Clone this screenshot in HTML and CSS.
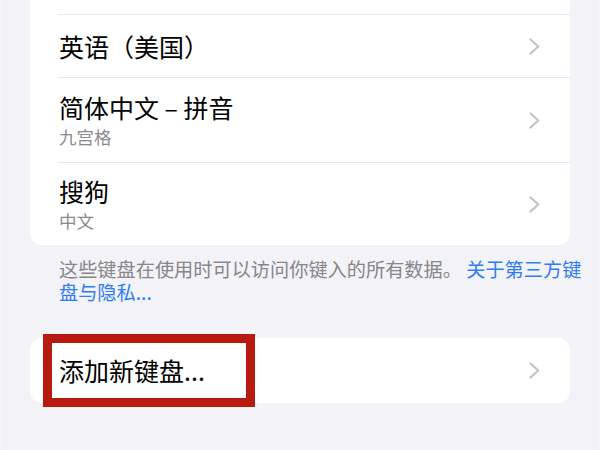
FILE: index.html
```html
<!DOCTYPE html>
<html lang="zh-CN">
<head>
    <meta charset="UTF-8">
    <meta name="viewport" content="width=device-width, initial-scale=1.0">
    <title>键盘</title>
    <link rel="stylesheet" href="styles.css">
</head>
<body>
    <div class="screen">
        <div class="card">
            <div class="row row-stub"></div>

            <div class="row">
                <div class="row-inner single">
                    <div class="row-text">
                        <div class="title">英语（美国）</div>
                    </div>
                    <svg class="chevron" viewBox="0 0 11 17"><polyline points="1.5,1.5 9.3,8.5 1.5,15.5"/></svg>
                </div>
            </div>

            <div class="row">
                <div class="row-inner">
                    <div class="row-text">
                        <div class="title">简体中文 – 拼音</div>
                        <div class="subtitle">九宫格</div>
                    </div>
                    <svg class="chevron" viewBox="0 0 11 17"><polyline points="1.5,1.5 9.3,8.5 1.5,15.5"/></svg>
                </div>
            </div>

            <div class="row">
                <div class="row-inner last">
                    <div class="row-text">
                        <div class="title">搜狗</div>
                        <div class="subtitle">中文</div>
                    </div>
                    <svg class="chevron" viewBox="0 0 11 17"><polyline points="1.5,1.5 9.3,8.5 1.5,15.5"/></svg>
                </div>
            </div>
        </div>

        <p class="footer">这些键盘在使用时可以访问你键入的所有数据。 <a href="#" class="link">关于第三方键盘与隐私...</a></p>

        <div class="card card-add">
            <div class="row">
                <div class="row-inner add">
                    <div class="row-text">
                        <div class="title">添加新键盘...</div>
                    </div>
                    <svg class="chevron" viewBox="0 0 11 17"><polyline points="1.5,1.5 9.3,8.5 1.5,15.5"/></svg>
                </div>
            </div>
            <!-- annotation box drawn over the row -->
            <div class="highlight"></div>
        </div>
    </div>
</body>
</html>
```

FILE: styles.css
```css
/* réglages iOS - claviers */

html, body {
    margin: 0;
    padding: 0;
}

body {
    font-family: "Noto Sans CJK SC", "Noto Sans", sans-serif;
    background-color: #f2f2f7;
    color: #000;
}

.screen {
    height: 450px;
    overflow: hidden;
    border-left: 2px solid #f7f7fa;
    border-right: 2px solid #f7f7fa;
    box-sizing: border-box;
}

.card {
    margin: 0 28px;
    background-color: #fff;
    border-radius: 0 0 12px 12px;
}

.row-stub {
    height: 14px;
}

.row {
    padding-left: 28px;
}

.row-inner {
    display: flex;
    align-items: center;
    border-top: 1px solid #e6e6eb;
    padding: 14px 30px 14px 1px;
}

.row-inner.single {
    padding-top: 16px;
    padding-bottom: 16px;
}

.row-inner.last {
    padding-top: 13px;
    padding-bottom: 13px;
}

.row-text {
    flex: 1;
}

.title {
    font-size: 25px;
    line-height: 30px;
}

.subtitle {
    margin-top: 4px;
    font-size: 17.5px;
    line-height: 22px;
    color: #8a8a8e;
}

.chevron {
    width: 11px;
    height: 17px;
    fill: none;
    stroke: #c4c4c8;
    stroke-width: 2.3;
    stroke-linecap: round;
    stroke-linejoin: round;
}

.footer {
    margin: 13px 12px 0 57px;
    font-size: 19.2px;
    line-height: 23px;
    color: #86868b;
}

.link {
    color: #2f7cf6;
    text-decoration: none;
}

.card-add {
    position: relative;
    margin-top: 34px;
    border-radius: 12px;
}

.row-inner.add {
    border-top: none;
    padding-top: 17px;
    padding-bottom: 18px;
}

.highlight {
    position: absolute;
    left: 13px;
    top: -4px;
    width: 212px;
    height: 73px;
    border: 9px solid #b81a10;
    box-sizing: border-box;
}
```
